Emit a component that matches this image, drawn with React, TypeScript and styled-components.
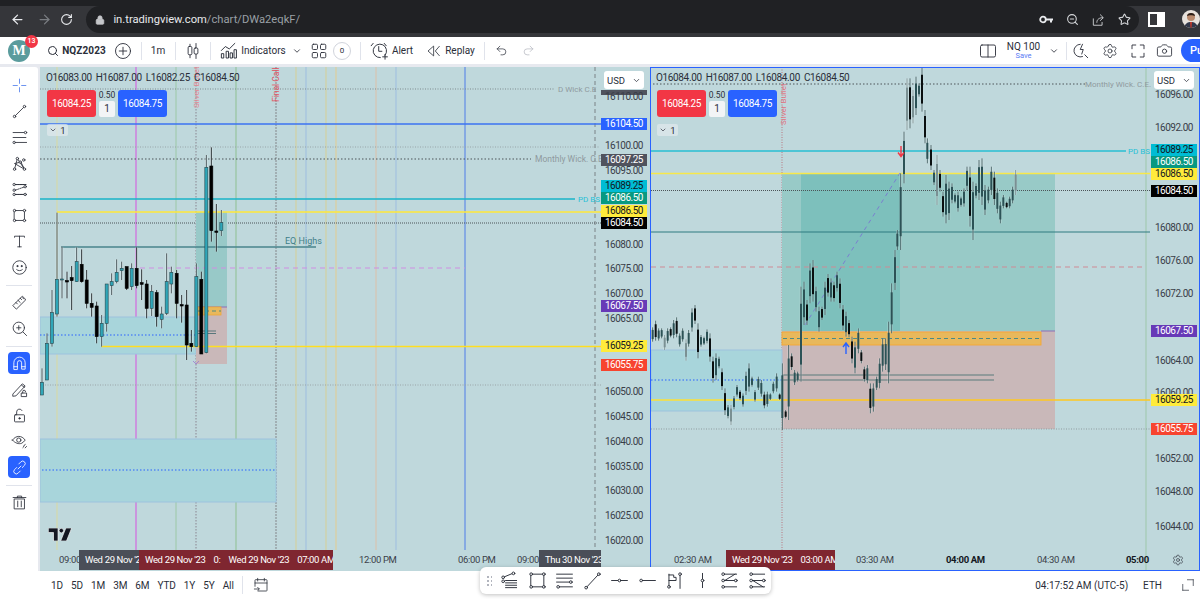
import React from 'react';
import styled, { createGlobalStyle } from 'styled-components';
import {
  ArrowLeft,
  ArrowRight,
  RotateCw,
  Lock,
  ZoomOut,
  Star,
  Search,
  ChevronDown,
  Undo2,
  Redo2,
  Settings,
  Camera,
} from 'lucide-react';

const GlobalStyle = createGlobalStyle`
  html, body { margin: 0; padding: 0; background: #fff; }
  body { font-family: Roboto, "Liberation Sans", sans-serif; }
`;

const INK = '#2a2e39';

/* ---------- small icon helper ---------- */
const Ico = ({ s = 20, vb = 24, sw = 1.2, c = INK, children }: { s?: number; vb?: number; sw?: number; c?: string; children: React.ReactNode }) => (
  <svg width={s} height={s} viewBox={`0 0 ${vb} ${vb}`} fill="none" stroke={c} strokeWidth={sw} strokeLinecap="round" strokeLinejoin="round">
    {children}
  </svg>
);

const Dot = ({ x, y, r = 1.7 }: { x: number; y: number; r?: number }) => <circle cx={x} cy={y} r={r} fill="#fff" />;

const CrossIcon = () => (
  <Ico c="#6c93f0" sw={1.4}>
    <path d="M12 3v6M12 15v6M3 12h6M15 12h6" />
  </Ico>
);
const LineIcon = () => (
  <Ico>
    <path d="M6 18L18 6" />
    <Dot x={5} y={19} />
    <Dot x={19} y={5} />
  </Ico>
);
const FibIcon = () => (
  <Ico>
    <path d="M3 5h16M3 12h18M7 19h15" />
    <Dot x={20.5} y={5} />
    <Dot x={4.5} y={19} />
  </Ico>
);
const PatternIcon = () => (
  <Ico>
    <path d="M5 20L9 5l10 15-5-10L5 12l14 8" />
    <Dot x={5} y={20} />
    <Dot x={9} y={5} />
    <Dot x={19} y={20} />
    <Dot x={18} y={7} />
    <Dot x={13} y={10} />
  </Ico>
);
const ChannelIcon = () => (
  <Ico>
    <path d="M6 5h15M6 19h15M6 13l14-5" strokeDasharray="2 1.5" />
    <path d="M6 5h15M6 19h15" />
    <Dot x={4.5} y={5} />
    <Dot x={4.5} y={13} />
    <Dot x={4.5} y={19} />
    <Dot x={20} y={19} />
    <Dot x={20} y={8} />
  </Ico>
);
const RectIcon = () => (
  <Ico>
    <rect x="5" y="5" width="14" height="14" />
    <Dot x={5} y={5} />
    <Dot x={19} y={5} />
    <Dot x={5} y={19} />
    <Dot x={19} y={19} />
  </Ico>
);
const TextIcon = () => (
  <Ico>
    <path d="M5 6V4.500h14V6M12 4.500v15M9.500 19.500h5" />
  </Ico>
);
const SmileIcon = () => (
  <Ico>
    <circle cx="12" cy="12" r="9.500" />
    <circle cx="9" cy="10" r=".8" fill={INK} />
    <circle cx="15" cy="10" r=".8" fill={INK} />
    <path d="M8 15c2 2 6 2 8 0" />
  </Ico>
);
const RulerIcon = () => (
  <Ico>
    <path d="M3 16L16 3l5 5L8 21zM7 12l2 2M10 9l3 3M13 6l2 2M16 5l2 2" />
  </Ico>
);
const ZoomPlusIcon = () => (
  <Ico>
    <circle cx="11" cy="11" r="8" />
    <path d="M11 8v6M8 11h6M17 17l5 5" />
  </Ico>
);
const MagnetIcon = () => (
  <Ico c="#fff">
    <path d="M4 20v-9a8 8 0 0116 0v9h-5v-9a3 3 0 00-6 0v9zM4 16.500h5M15 16.500h5" />
  </Ico>
);
const PencilLockIcon = () => (
  <Ico>
    <path d="M3 18L16 4l4 3L7 21l-4 .5zM15 6l4 3" />
    <rect x="15" y="17" width="7" height="5" />
    <path d="M16.500 17v-2a2 2 0 014 0" />
  </Ico>
);
const LockIcon = () => (
  <Ico>
    <rect x="5" y="11" width="14" height="10" rx="1" />
    <path d="M8 11V7a4 4 0 017.500-2" />
    <circle cx="12" cy="16" r="1" fill={INK} />
  </Ico>
);
const EyeIcon = () => (
  <Ico>
    <path d="M2 10c5-7 13-7 18 0-1.500 2-3 3.500-5 4.500-4 1.500-9 0-13-4.500z" />
    <circle cx="11" cy="10" r="3" />
    <path d="M17 21c1 0 1-5 3-5M22 19l-2 2" />
  </Ico>
);
const LinkIcon = () => (
  <Ico c="#fff">
    <path d="M10 14l4-4M8 12l-3 3a3.500 3.500 0 005 5l3-3M16 12l3-3a3.500 3.500 0 00-5-5l-3 3" />
  </Ico>
);
const TrashIcon = () => (
  <Ico>
    <path d="M5 7h14v14H5zM3 5h18M9 5V3h6v2M9.500 10v8M14.500 10v8" />
  </Ico>
);

const CandleIcon = () => (
  <Ico s={18}>
    <path d="M8 3v18M16 2v20" />
    <rect x="5.500" y="6" width="5" height="11" rx="1.500" fill="#fff" />
    <rect x="13.500" y="8" width="5" height="8" rx="1.500" fill="#fff" />
  </Ico>
);
const IndicatorsIcon = () => (
  <Ico s={19}>
    <path d="M3 12L8 7l5 3 7-7M3 21v-5h3v5zM9 21v-8h3v8zM14 21v-6h3v6zM19 21V11h3v10z" />
  </Ico>
);
const LayoutsIcon = () => (
  <Ico s={18}>
    <rect x="3" y="3" width="7" height="7" rx="1.500" />
    <rect x="14" y="3" width="7" height="7" rx="1.500" />
    <rect x="3" y="14" width="7" height="7" rx="1.500" />
    <rect x="14" y="14" width="7" height="7" rx="1.500" />
  </Ico>
);
const AlarmIcon = () => (
  <Ico s={19}>
    <path d="M13 21a8.500 8.500 0 11 6-3M11 7v6h4M4 3L1.500 6M18 3l2.500 3M19 17v6M16 20h6" />
  </Ico>
);
const ReplayIcon = () => (
  <Ico s={16}>
    <path d="M11 5l-8 7 8 7zM20 5l-6 7 6 7" />
  </Ico>
);
const SplitIcon = () => (
  <Ico s={18}>
    <rect x="2" y="4" width="20" height="16" rx="2" />
    <path d="M12 4v16" />
  </Ico>
);
const QuickIcon = () => (
  <Ico s={18}>
    <path d="M11 3a8.500 8.500 0 103 16.500M17 17l4 4M14 3l-3 7h4l-2 6" />
  </Ico>
);
const FullscreenIcon = () => (
  <Ico s={18}>
    <path d="M4 9V4h5M15 4h5v5M20 15v5h-5M9 20H4v-5" />
  </Ico>
);
const PanelIcon = () => (
  <svg width="17" height="15" viewBox="0 0 17 15">
    <path fill="#fff" fillRule="evenodd" d="M0 0h17v15H0zM2 2v11h7V2z" />
  </svg>
);
const KeyIcon = () => (
  <svg width="14" height="9" viewBox="0 0 14 9">
    <circle cx="4" cy="4.500" r="2.800" fill="none" stroke="#e8eaed" strokeWidth="1.800" />
    <path d="M7 3.500h7v2h-1v2h-2v-2H7z" fill="#e8eaed" />
  </svg>
);
const ShareBoxIcon = () => (
  <Ico s={14} c="#d5d7da" sw={1.5}>
    <path d="M4 10v11h15v-5M10 16c0-5 4-8 10-8M16 3l5 5-5 5" />
  </Ico>
);
const CalendarIcon = () => (
  <Ico s={16}>
    <path d="M8 21h12a1 1 0 001-1V5a1 1 0 00-1-1H4a1 1 0 00-1 1v9M3 9h18M7 2v4M17 2v4M2 18h7M7 15.500L9.500 18 7 20.500" />
  </Ico>
);
const AdjustIcon = () => (
  <Ico s={14}>
    <path d="M3 21V11M3 21h10M21 3v10M21 3H11" />
  </Ico>
);

const TvLogo = () => (
  <svg width="24" height="13" viewBox="0 0 36 20">
    <path d="M0 0h15v20H8V7H0z" fill="#131722" stroke="#fff" strokeWidth="1" />
    <circle cx="20" cy="4" r="3.500" fill="#131722" stroke="#fff" strokeWidth="1" />
    <path d="M27 0h9l-8 20h-9z" fill="#131722" stroke="#fff" strokeWidth="1" />
  </svg>
);

const FloatIcons = [
  <Ico s={19} key="a"><path d="M4 8l12-5M7 12h14M7 15h14M7 18h14M7 21h14" /><Dot x={4} y={8} /><Dot x={4} y={13} /><Dot x={17} y={3} /></Ico>,
  <Ico s={19} key="b"><rect x="4" y="4" width="16" height="16" /><Dot x={4} y={4} /><Dot x={20} y={4} /><Dot x={4} y={20} /><Dot x={20} y={20} /></Ico>,
  <Ico s={19} key="c"><path d="M2 4h20M2 9h20M2 14h18M6 20h16" /><Dot x={20} y={14} /><Dot x={4} y={20} /></Ico>,
  <Ico s={19} key="d"><path d="M5 20L19 5" /><Dot x={4} y={21} /><Dot x={20} y={4} /></Ico>,
  <Ico s={19} key="e"><path d="M2 12h20" /><Dot x={12} y={12} /></Ico>,
  <Ico s={19} key="f"><path d="M6 12h16" /><Dot x={4} y={12} /></Ico>,
  <Ico s={19} key="g"><path d="M5 4v16M5 5h6v3h3v4H5M19 6v16" /><Dot x={5} y={20} /><Dot x={19} y={4} /></Ico>,
  <Ico s={19} key="h"><path d="M12 3v18" /><Dot x={12} y={12} /></Ico>,
  <Ico s={19} key="i"><path d="M5 4h16M5 12h16M5 20h16M6 12l13-8" /><Dot x={4} y={4} /><Dot x={4} y={12} /><Dot x={4} y={20} /><Dot x={20} y={12} /></Ico>,
  <Ico s={19} key="j"><path d="M5 4h16M5 12h16M5 20h16M6 12l13 8" /><Dot x={4} y={4} /><Dot x={20} y={12} /><Dot x={4} y={20} /><Dot x={4} y={12} /></Ico>,
];

/* ---------- chart data (reference pixel coords) ---------- */
type C = [number, number, number, number, number, number];
// x, high, bodyTop, bodyBottom, low, black?
const leftRaw: C[] = [
  [126,715,757,795,795,0],[141,610,640,750,750,0],[156,480,548,640,650,0],[171,248,448,552,560,0],
  [186,350,447,449,505,0],[201,425,452,456,505,1],[215,408,443,452,540,1],[230,352,395,455,456,0],
  [245,358,403,455,458,1],[260,420,450,520,535,1],[275,490,520,532,560,1],[290,515,528,620,640,1],
  [305,555,580,620,650,0],[320,462,462,580,605,0],[335,430,455,467,495,0],[350,388,427,455,460,0],
  [365,395,415,422,450,0],[380,410,410,475,480,1],[395,400,415,470,480,0],[410,352,415,467,475,1],
  [425,418,458,463,510,1],[440,450,462,535,565,1],[455,465,484,535,558,0],[470,480,488,560,590,1],
  [485,530,552,568,595,0],[500,370,455,550,555,0],[514,410,427,462,490,0],[530,420,430,520,565,1],
  [545,495,524,528,578,1],[560,480,525,645,690,1],[574,600,640,650,665,1],[589,400,440,650,650,0],
  [604,425,448,672,672,1],[619,75,112,668,670,0],[634,52,108,302,335,1],[649,222,303,307,365,1],
  [664,240,278,302,318,0],
];
const leftCandles: C[] = leftRaw.map(([x, h, t, b, l, k]) => [x / 3, 130 + h / 3, 130 + t / 3, 130 + b / 3, 130 + l / 3, k]);

type R = [number, number, number, number];
// x, high, low, shade (0 light, 1 teal, 2 black) in zoomed coords
const rightA: R[] = [
  [8,232,275,1],[17,212,272,2],[26,235,272,1],[35,235,265,1],[44,255,300,0],[53,235,280,1],[62,232,262,2],[71,210,265,1],
  [80,202,262,2],[89,250,290,1],[98,235,275,1],[108,268,332,0],[116,240,290,1],[126,175,245,1],[135,165,222,2],[144,220,325,2],
  [153,255,290,1],[162,260,285,1],[171,238,280,1],[180,250,335,2],[189,320,398,2],[198,310,390,1],[207,320,355,1],[216,355,420,2],
  [225,415,495,2],[234,465,505,1],[243,465,525,0],[252,438,478,1],[261,405,440,1],[270,420,450,2],[279,430,470,1],[288,365,435,1],
  [297,340,425,1],[306,380,410,1],[315,420,455,1],[325,380,420,1],[334,390,440,1],[343,425,475,2],[352,425,470,1],[361,430,450,1],
  [370,395,430,1],[380,370,425,1],[389,430,450,2],[397,340,540,1],[407,480,505,2],[416,285,510,1],[425,310,360,2],[434,360,405,1],
  [443,365,395,1],[453,110,395,1],[462,95,225,1],[471,150,225,2],[480,40,160,1],[489,30,155,2],[498,110,185,1],[507,170,245,1],
  [516,170,210,2],[525,95,195,1],[534,72,140,2],[543,85,155,1],[552,95,155,2],[561,65,125,1],[570,85,175,2],[579,165,240,2],
  [588,185,260,1],[597,210,262,2],[606,260,340,2],[615,275,370,1],[625,235,310,1],[634,300,340,2],[643,350,395,2],[652,345,400,1],
  [661,400,490,2],[670,400,485,1],[680,380,420,1],[689,325,415,1],[698,265,365,1],[707,265,360,1],[716,215,400,1],[725,100,250,1],
  [735,0,120,1],
];
const rightB: R[] = [
  [352,510,570,1],[362,340,570,1],[372,215,370,1],[381,55,210,0],[390,55,205,2],[399,90,190,0],[408,50,165,1],[417,70,110,1],
  [426,20,155,2],[435,150,250,2],[442,235,310,1],[453,255,330,2],[462,330,375,1],[471,285,435,0],[480,330,395,2],[489,395,470,2],
  [498,345,490,1],[507,365,480,1],[516,370,430,1],[525,400,430,1],[534,395,455,1],[543,410,440,1],[552,385,440,1],[561,320,390,1],
  [570,320,500,2],[579,365,540,1],[588,370,415,1],[597,300,420,1],[606,295,435,1],[615,375,465,1],[625,380,430,1],[634,320,405,1],
  [643,335,435,2],[652,385,460,1],[661,425,490,1],[670,405,445,1],[680,425,445,2],[689,410,445,1],[698,380,430,1],[707,330,405,0],
];
const rightCandles: R[] = [
  ...rightA.map(([x, h, l, k]): R => [650 + x / 3, 250 + h / 3, 250 + l / 3, k]),
  ...rightB.map(([x, h, l, k]): R => [780 + x / 3, 60 + h / 3, 60 + l / 3, k]),
];

const leftPrices: [number, string][] = [
  [97,'16110.00'],[146,'16100.00'],[171,'16095.00'],[245,'16080.00'],[269,'16075.00'],[294,'16070.00'],[319,'16065.00'],
  [392,'16050.00'],[417,'16045.00'],[442,'16040.00'],[467,'16035.00'],[491,'16030.00'],[516,'16025.00'],[541,'16020.00'],
];
const rightPrices: [number, string][] = [
  [95,'16096.00'],[128,'16092.00'],[228,'16080.00'],[261,'16076.00'],[294,'16072.00'],[361,'16064.00'],[393,'16060.00'],
  [459,'16052.00'],[492,'16048.00'],[527,'16044.00'],
];
type Tag = [number, string, string, string];
const leftTags: Tag[] = [
  [124,'16104.50','#2962ff','#fff'],[160,'16097.25','#50535e','#fff'],[186,'16089.25','#00bcd4','#131722'],
  [198,'16086.50','#089981','#fff'],[211,'16086.50','#ffeb3b','#131722'],[223,'16084.50','#000','#fff'],[306,'16067.50','#673ab7','#fff'],
  [346,'16059.25','#ffeb3b','#131722'],[365,'16055.75','#f7442f','#fff'],
];
const rightTags: Tag[] = [
  [150,'16089.25','#00bcd4','#131722'],[162,'16086.50','#089981','#fff'],[174,'16086.50','#ffeb3b','#131722'],[191,'16084.50','#000','#fff'],
  [331,'16067.50','#673ab7','#fff'],[400,'16059.25','#ffeb3b','#131722'],[429,'16055.75','#f7442f','#fff'],
];

/* ---------- layout ---------- */
const Page = styled.div`
  position: relative;
  width: 1200px;
  height: 599px;
  overflow: hidden;
  display: flex;
  flex-direction: column;
  background: #fff;
`;

const TabStrip = styled.div`
  height: 6px;
  background: #202124;
`;

const BrowserBar = styled.div`
  height: 31px;
  background: #35363a;
  display: flex;
  align-items: flex-start;
  color: #e8eaed;
`;

const NavBtn = styled.div<{ $w: number; $dim?: boolean }>`
  width: ${(p) => p.$w}px;
  height: 27px;
  display: flex;
  align-items: center;
  justify-content: center;
  color: ${(p) => (p.$dim ? '#7a7d82' : '#e8eaed')};
`;

const UrlBar = styled.div`
  width: 1061px;
  height: 27px;
  margin-left: 5px;
  border-radius: 14px;
  background: #202124;
  display: flex;
  align-items: center;
  padding: 0 2px 0 9px;
  box-sizing: border-box;
`;

const UrlText = styled.div`
  margin-left: 8px;
  font-size: 11.2px;
  color: #e8eaed;
  flex: 1;
  span { color: #9aa0a6; }
`;

const UrlIcon = styled.div`
  width: 26px;
  display: flex;
  justify-content: center;
  color: #d5d7da;
`;

const ProfileDot = styled.div`
  width: 18px;
  height: 18px;
  margin: 4px 0 0 9px;
  border-radius: 50%;
  overflow: hidden;
  background: #e8e2dc;
`;

const TopBar = styled.div`
  height: 27px;
  background: #fff;
  display: flex;
  align-items: center;
  color: ${INK};
  font-size: 10px;
`;

const Slot = styled.div<{ $w: number; $ml?: number }>`
  flex: none;
  width: ${(p) => p.$w}px;
  margin-left: ${(p) => p.$ml ?? 0}px;
  display: flex;
  align-items: center;
  justify-content: center;
  gap: 3px;
  white-space: nowrap;
`;

const VDivider = styled.div<{ $ml: number }>`
  flex: none;
  width: 1px;
  height: 18px;
  margin-left: ${(p) => p.$ml}px;
  background: #e0e3eb;
`;

const Avatar = styled.div`
  position: relative;
  width: 22px;
  height: 22px;
  border-radius: 50%;
  background: #5b9c9d;
  color: #fff;
  font: 700 14px "Liberation Serif", serif;
  display: flex;
  align-items: center;
  justify-content: center;
`;

const Badge = styled.span`
  position: absolute;
  top: -5px;
  right: -8px;
  width: 13px;
  height: 13px;
  border-radius: 50%;
  background: #f23645;
  color: #fff;
  font: 500 7px Roboto, sans-serif;
  display: flex;
  align-items: center;
  justify-content: center;
`;

const Symbol = styled.span`
  font-weight: 700;
  font-size: 10px;
  letter-spacing: 0.1px;
`;

const CountCircle = styled.div`
  width: 16px;
  height: 16px;
  border-radius: 50%;
  border: 1px solid #d1d4dc;
  font-size: 8px;
  display: flex;
  align-items: center;
  justify-content: center;
`;

const SaveBox = styled.div`
  display: flex;
  flex-direction: column;
  align-items: center;
  line-height: 9px;
  font-size: 10px;
  small { font-size: 7.5px; color: #5b7cf5; }
`;

const PublishBtn = styled.div`
  flex: none;
  width: 50px;
  height: 23px;
  margin-left: 8px;
  border-radius: 12px 0 0 12px;
  background: #2962ff;
  color: #fff;
  font-size: 11px;
  font-weight: 500;
  line-height: 23px;
  padding-left: 9px;
`;

const Main = styled.div`
  flex: none;
  height: 507px;
  display: flex;
  background: #e7e9ef;
  padding-top: 3px;
  box-sizing: border-box;
`;

const SideBar = styled.div`
  flex: none;
  width: 38px;
  margin-right: 2px;
  padding-top: 5px;
  box-sizing: border-box;
  background: #fff;
  border-radius: 0 3px 0 0;
  display: flex;
  flex-direction: column;
  align-items: center;
`;

const SideBtn = styled.div<{ $on?: boolean }>`
  flex: none;
  width: 22px;
  height: ${(p) => (p.$on ? 22 : 26)}px;
  margin: ${(p) => (p.$on ? '2px 0' : '0')};
  border-radius: 4px;
  background: ${(p) => (p.$on ? '#2962ff' : 'transparent')};
  display: flex;
  align-items: center;
  justify-content: center;
  svg { width: 17px; height: 17px; }
`;

const SideSep = styled.div`
  flex: none;
  width: 26px;
  height: 1px;
  margin: 5px 0 3px;
  background: #e0e3eb;
`;

const Pane = styled.div<{ $w: number; $active?: boolean }>`
  position: relative;
  flex: none;
  width: ${(p) => p.$w}px;
  height: 504px;
  background: #bfd8dc;
  overflow: hidden;
  &::after {
    content: '';
    display: ${(p) => (p.$active ? 'block' : 'none')};
    position: absolute;
    inset: 0;
    border: 1.5px solid #2962ff;
    pointer-events: none;
  }
`;

const ChartSvg = styled.svg`
  position: absolute;
  inset: 0;
  width: 100%;
  height: 100%;
  text {
    font-family: Roboto, "Liberation Sans", sans-serif;
  }
`;

const Legend = styled.div<{ $x: number }>`
  position: absolute;
  top: 4px;
  left: ${(p) => p.$x}px;
  font-size: 10px;
  line-height: 14px;
  color: #2a2e39;
  white-space: nowrap;
  display: flex;
  gap: 4px;
  letter-spacing: -0.35px;
`;

const TradeBox = styled.div<{ $x: number }>`
  position: absolute;
  top: 23px;
  left: ${(p) => p.$x}px;
  display: flex;
  gap: 3px;
  align-items: stretch;
`;

const TradeBtn = styled.div<{ $bg: string }>`
  width: 49px;
  height: 27px;
  border-radius: 3px;
  background: ${(p) => p.$bg};
  color: #fff;
  font-size: 10px;
  letter-spacing: -0.4px;
  display: flex;
  align-items: center;
  justify-content: center;
`;

const QtyBox = styled.div`
  width: 16px;
  display: flex;
  flex-direction: column;
  align-items: center;
  justify-content: space-between;
  font-size: 8.5px;
  color: #2a2e39;
  b {
    width: 16px;
    height: 16px;
    border-radius: 2px;
    background: #f2f4f6;
    font-weight: 400;
    font-size: 10px;
    line-height: 16px;
    text-align: center;
  }
`;

const Collapse = styled.div<{ $x: number }>`
  position: absolute;
  top: 57px;
  left: ${(p) => p.$x}px;
  width: 21px;
  height: 12px;
  font-size: 9.5px;
  color: #2a2e39;
  background: rgba(225, 233, 236, 0.7);
  border-radius: 2px;
  display: flex;
  align-items: center;
  justify-content: center;
  gap: 3px;
`;

const PriceAxis = styled.div<{ $x: number; $w: number }>`
  position: absolute;
  top: 0;
  bottom: 0;
  left: ${(p) => p.$x}px;
  width: ${(p) => p.$w}px;
`;

const UsdBox = styled.div`
  position: absolute;
  top: 4px;
  right: 3px;
  left: 3px;
  height: 18px;
  border-radius: 3px;
  background: #fff;
  font-size: 9.5px;
  color: #2a2e39;
  display: flex;
  align-items: center;
  justify-content: space-between;
  padding: 0 3px;
  box-sizing: border-box;
`;

const PriceText = styled.div<{ $y: number }>`
  position: absolute;
  left: 0;
  right: 0;
  top: ${(p) => p.$y - 73}px;
  height: 12px;
  line-height: 12px;
  text-align: center;
  font-size: 10px;
  letter-spacing: -0.5px;
  color: #3a3e49;
`;

const PriceTag = styled(PriceText)<{ $bg: string; $fg: string }>`
  background: ${(p) => p.$bg};
  color: ${(p) => p.$fg};
`;

const StubTag = styled.div`
  position: absolute;
  left: 0;
  right: 0;
  top: 23px;
  height: 5px;
  background: #50535e;
`;

const TimeAxis = styled.div`
  position: absolute;
  left: 0;
  right: 0;
  bottom: 0;
  height: 21px;
  font-size: 9.5px;
  letter-spacing: -0.35px;
  color: #3a3e49;
`;

const TimeLabel = styled.div<{ $x: number; $strong?: boolean }>`
  position: absolute;
  top: 0;
  left: ${(p) => p.$x}px;
  height: 20px;
  line-height: 20px;
  white-space: nowrap;
  font-weight: ${(p) => (p.$strong ? 700 : 400)};
  color: ${(p) => (p.$strong ? '#131722' : '#3a3e49')};
`;

const TimeMark = styled.div<{ $x: number; $w: number; $bg: string }>`
  position: absolute;
  top: 0;
  left: ${(p) => p.$x}px;
  width: ${(p) => p.$w}px;
  height: 20px;
  line-height: 20px;
  padding-left: 6px;
  box-sizing: border-box;
  overflow: hidden;
  white-space: nowrap;
  display: flex;
  gap: 8px;
  background: ${(p) => p.$bg};
  color: #fff;
`;

const CornerGear = styled.div`
  position: absolute;
  right: 16px;
  top: 4px;
  display: flex;
`;

const LogoMark = styled.div`
  position: absolute;
  left: 8px;
  top: 461px;
  display: flex;
`;

const BottomBar = styled.div`
  flex: none;
  height: 28px;
  background: #fff;
  display: flex;
  align-items: center;
  padding-left: 51px;
  font-size: 10px;
  color: ${INK};
`;

const Ranges = styled.div`
  display: flex;
  gap: 8px;
  letter-spacing: -0.1px;
`;

const BarSep = styled.div`
  width: 1px;
  height: 18px;
  margin: 0 10px 0 8px;
  background: #e0e3eb;
`;

const ClockArea = styled.div`
  margin-left: auto;
  display: flex;
  align-items: center;
  gap: 15px;
  padding-right: 5px;
`;

const EthLabel = styled.span`
  margin-right: 4px;
`;

const FloatBar = styled.div`
  position: absolute;
  left: 480px;
  top: 567px;
  width: 291px;
  height: 27px;
  border-radius: 6px;
  background: #fff;
  box-shadow: 0 1px 4px rgba(0, 0, 0, 0.25);
  display: flex;
  align-items: center;
  padding-left: 16px;
  box-sizing: border-box;
`;

const FloatBtn = styled.div`
  width: 27.500px;
  display: flex;
  justify-content: center;
`;

const Grip = styled.div`
  position: absolute;
  left: 6px;
  top: 8px;
  width: 6px;
  height: 11px;
  background-image: radial-gradient(#b2b5be 0.8px, transparent 0.9px);
  background-size: 4px 4px;
`;

/* ---------- chart drawings ---------- */
const VLine = ({ x, y1 = 67, y2 = 550, c, w = 1, dash }: { x: number; y1?: number; y2?: number; c: string; w?: number; dash?: string }) => (
  <line x1={x} x2={x} y1={y1} y2={y2} stroke={c} strokeWidth={w} strokeDasharray={dash} />
);
const HLine = ({ y, x1, x2, c, w = 1, dash }: { y: number; x1: number; x2: number; c: string; w?: number; dash?: string }) => (
  <line x1={x1} x2={x2} y1={y} y2={y} stroke={c} strokeWidth={w} strokeDasharray={dash} />
);
const Label = ({ x, y, c = '#8f9a9e', size = 8, bold, children }: { x: number; y: number; c?: string; size?: number; bold?: boolean; children: string }) => (
  <text x={x} y={y} fill={c} fontSize={size} fontWeight={bold ? 700 : 400}>{children}</text>
);
const Rotated = ({ x, y, c, size = 8, children }: { x: number; y: number; c: string; size?: number; children: string }) => (
  <text x={x} y={y} fill={c} fontSize={size} transform={`rotate(-90 ${x} ${y})`}>{children}</text>
);

const LeftChart = () => (
  <ChartSvg viewBox="40 67 610 504">
    <VLine x={57} c="#d9d9a0" />
    <VLine x={136} c="#d653e0" />
    <VLine x={176} c="#9cc8a6" />
    <VLine x={196} c="#8a8590" dash="1.500 1.500" />
    <VLine x={236} c="#9cc8a6" w={1.4} />
    <VLine x={276} c="#8e9498" dash="2 1" w={1.2} />
    <VLine x={296} c="#d6cf95" />
    <VLine x={306} c="#9dbde0" />
    <VLine x={326} c="#d6cf95" />
    <VLine x={336} c="#e3cc8f" />
    <VLine x={376} c="#dcc0a8" />
    <VLine x={396} c="#9dbde0" />
    <VLine x={465} c="#4f7de8" />
    <VLine x={595} c="#7a8286" dash="4 3" y2={571} />

    <HLine y={89} x1={40} x2={555} c="#7f8b8f" dash="1 1.500" />
    <HLine y={124} x1={40} x2={601} c="#3b73f2" w={1.6} />
    <HLine y={147} x1={40} x2={600} c="#98a4a8" dash="1 1.500" />
    <HLine y={159} x1={40} x2={531} c="#4c5458" dash="1.500 2" />
    <HLine y={199} x1={40} x2={575} c="#18b4c8" w={1.3} />
    <HLine y={223} x1={40} x2={601} c="#4c5458" dash="1 1" />
    <HLine y={385} x1={40} x2={601} c="#9aa5a8" dash="1 1.500" />

    <rect x={40} y={317} width={156} height={37} fill="#a8d5db" stroke="#9dc2de" />
    <HLine y={335} x1={40} x2={196} c="#2962ff" dash="1.500 2" w={1.2} />
    <rect x={40} y={439} width={236} height={63} fill="#a8d5db" stroke="#9dc2de" />
    <HLine y={470} x1={42} x2={276} c="#2962ff" dash="1.500 2" w={1.2} />

    <rect x={196} y={212} width={31} height={95} fill="#98c9c8" />
    <rect x={196} y={307} width={31} height={57} fill="#c9b8b9" />
    <HLine y={307} x1={196} x2={227} c="#8d6fb8" />
    <rect x={197} y={307} width={24} height={8} fill="#e8b85c" stroke="#f0a733" strokeWidth={0.8} />
    <HLine y={311} x1={198} x2={221} c="#4f8a82" dash="4 3" />

    <HLine y={212} x1={57} x2={601} c="#ffe83a" w={1.4} />
    <HLine y={247} x1={61} x2={316} c="#49858c" w={1.3} />
    <HLine y={268} x1={140} x2={465} c="#cf8ee2" w={1.2} dash="5 4" />
    <HLine y={346.5} x1={101} x2={601} c="#ffde21" w={1.4} />
    <HLine y={331} x1={196} x2={216} c="#58777b" />
    <HLine y={333.500} x1={196} x2={216} c="#58777b" />

    <Label x={558} y={92} size={8}>D Wick C.E</Label>
    <Label x={535} y={162} size={8.500}>Monthly Wick. C.E</Label>
    <Label x={578} y={202} c="#27c0d6">PD BS</Label>
    <Label x={285} y={244} c="#3f8089" size={9}>EQ Highs</Label>
    <Rotated x={199} y={108} c="#e5848f">Silver Bullet</Rotated>
    <Rotated x={279} y={102} c="#e2515f" size={8.500}>Final Call</Rotated>

    {leftCandles.map(([x, h, t, b, l, k]) => (
      <g key={x}>
        <line x1={x} x2={x} y1={h} y2={l} stroke="rgba(255,255,255,.35)" strokeWidth={2.5} />
        <line x1={x} x2={x} y1={h} y2={l} stroke={k ? '#2b3336' : '#4c5b5e'} strokeWidth={1} />
        <rect x={x - 1.500} y={t} width={3} height={Math.max(b - t, 1)} fill={k ? '#000' : '#2fa6b8'} stroke={k ? '#000' : '#25474d'} strokeWidth={0.6} />
      </g>
    ))}
    <path d="M193 361l3 3 3-3" fill="none" stroke="#9a79d0" strokeWidth={0.8} />
  </ChartSvg>
);

const shades = ['#7a9093', '#2c5256', '#0a0f10'];

const RightChart = () => (
  <ChartSvg viewBox="650 67 550 504">
    <VLine x={782} c="#b8757f" dash="1 1.500" />
    <VLine x={1146} c="#9dc7aa" y2={571} />

    <rect x={782} y={174} width={273} height={157} fill="#98cac7" />
    <rect x={801} y={174} width={99} height={157} fill="#7dc0bc" />
    <rect x={782} y={331} width={273} height={98} fill="#c9b8b9" />
    <rect x={651} y={350} width={131} height={61} fill="#a8d5db" stroke="#9dc2de" />
    <HLine y={380} x1={651} x2={782} c="#2962ff" dash="1.500 2" w={1.2} />
    <rect x={782} y={332} width={259} height={13} fill="#e8b85c" stroke="#f5a733" strokeWidth={0.9} />
    <HLine y={338.500} x1={783} x2={1041} c="#4f8a82" dash="4 3" />
    <HLine y={331} x1={1041} x2={1055} c="#8d6fb8" />

    <HLine y={84} x1={653} x2={1085} c="#4c5458" dash="1.500 2" />
    <HLine y={151} x1={651} x2={1126} c="#27bfd3" w={1.6} />
    <HLine y={173.500} x1={651} x2={1150} c="#f7e84a" w={1.3} />
    <HLine y={190.500} x1={651} x2={1150} c="#4c5458" dash="1 1" />
    <HLine y={232} x1={651} x2={1150} c="#2f7a80" w={1.1} />
    <HLine y={267} x1={651} x2={1146} c="#cf8a95" dash="5 4" />
    <HLine y={375} x1={782} x2={994} c="#5a7a7c" w={1.1} />
    <HLine y={380} x1={782} x2={994} c="#5a7a7c" w={1.1} />
    <HLine y={400} x1={651} x2={782} c="#ffe033" w={1.4} />
    <HLine y={400} x1={782} x2={1150} c="#ffc81f" w={1.4} />
    <HLine y={429} x1={651} x2={1150} c="#8f9a9e" dash="1 1.500" />

    <line x1={805} y1={325} x2={900} y2={173} stroke="#7a7fd0" strokeWidth={1} strokeDasharray="4 4" />

    <Label x={1085} y={87}>Monthly Wick. C.E.</Label>
    <Label x={1128} y={154} c="#27c0d6">PD BS</Label>
    <Rotated x={786} y={125} c="#e2707e">Silver Bullet</Rotated>

    {rightCandles.map(([x, h, l, k]) => {
      const inset = (l - h) * 0.18;
      return (
        <g key={`${x}-${h}`}>
          <line x1={x} x2={x} y1={h} y2={l} stroke="rgba(255,255,255,.3)" strokeWidth={2.4} />
          <line x1={x} x2={x} y1={h} y2={l} stroke={k === 0 ? '#7a9093' : '#3e5c60'} strokeWidth={0.9} />
          <rect x={x - 1} y={h + inset} width={2} height={l - h - inset * 2} fill={shades[k]} />
        </g>
      );
    })}

    <path d="M901 146v10M898 152.500l3 4 3-4" fill="none" stroke="#f23645" strokeWidth={1.4} />
    <path d="M846 354v-11M843 347l3-4 3 4" fill="none" stroke="#2962ff" strokeWidth={1.4} />
  </ChartSvg>
);

const PriceColumn = ({ prices, tags, stub }: { prices: [number, string][]; tags: Tag[]; stub?: boolean }) => (
  <>
    <UsdBox>USD <ChevronDown size={9} strokeWidth={2} /></UsdBox>
    {stub && <StubTag />}
    {prices.map(([y, t]) => <PriceText key={y} $y={y}>{t}</PriceText>)}
    {tags.map(([y, t, bg, fg]) => <PriceTag key={y} $y={y} $bg={bg} $fg={fg}>{t}</PriceTag>)}
  </>
);

const ChartHead = ({ x, o, l }: { x: number; o: string; l: string }) => (
  <>
    <Legend $x={x}>
      <span>O{o}</span><span>H16087.00</span><span>L{l}</span><span>C16084.50</span>
    </Legend>
    <TradeBox $x={x + 1}>
      <TradeBtn $bg="#f23645">16084.25</TradeBtn>
      <QtyBox>0.50<b>1</b></QtyBox>
      <TradeBtn $bg="#2962ff">16084.75</TradeBtn>
    </TradeBox>
    <Collapse $x={x + 1}><ChevronDown size={8} strokeWidth={2} /> 1</Collapse>
  </>
);

export default function App() {
  const sideTop = [CrossIcon, LineIcon, FibIcon, PatternIcon, ChannelIcon, RectIcon, TextIcon, SmileIcon];
  const ranges = ['1D', '5D', '1M', '3M', '6M', 'YTD', '1Y', '5Y', 'All'];

  return (
    <Page>
      <GlobalStyle />
      <TabStrip />
      <BrowserBar>
        <NavBtn $w={36}><ArrowLeft size={15} /></NavBtn>
        <NavBtn $w={17} $dim><ArrowRight size={15} /></NavBtn>
        <NavBtn $w={29}><RotateCw size={13} /></NavBtn>
        <UrlBar>
          <Lock size={10} fill="#c5c7ca" color="#c5c7ca" />
          <UrlText>in.tradingview.com<span>/chart/DWa2eqkF/</span></UrlText>
          <UrlIcon><KeyIcon /></UrlIcon>
          <UrlIcon><ZoomOut size={13} /></UrlIcon>
          <UrlIcon><ShareBoxIcon /></UrlIcon>
          <UrlIcon><Star size={13} /></UrlIcon>
        </UrlBar>
        <NavBtn $w={34}><PanelIcon /></NavBtn>
        <ProfileDot>
          <svg width="18" height="18" viewBox="0 0 18 18">
            <circle cx="9" cy="7" r="4" fill="#b98a6d" />
            <path d="M5 6c0-4 8-4 8 0-2-1-6-1-8 0z" fill="#2a1d16" />
            <path d="M2 18c1-5 4-6 7-6s6 1 7 6z" fill="#31384a" />
            <path d="M8 12h2l-.5 6h-1z" fill="#c0392b" />
          </svg>
        </ProfileDot>
      </BrowserBar>

      <TopBar>
        <Slot $w={38}><Avatar>M<Badge>13</Badge></Avatar></Slot>
        <Slot $w={63} $ml={7}><Search size={12} strokeWidth={2} /><Symbol>NQZ2023</Symbol></Slot>
        <Slot $w={22} $ml={4}><Ico s={18} sw={1.2}><circle cx="12" cy="12" r="10" /><path d="M12 7v10M7 12h10" /></Ico></Slot>
        <VDivider $ml={7} />
        <Slot $w={24} $ml={4}>1m</Slot>
        <VDivider $ml={5} />
        <Slot $w={22} $ml={6}><CandleIcon /></Slot>
        <VDivider $ml={6} />
        <Slot $w={69} $ml={7}><IndicatorsIcon />Indicators</Slot>
        <Slot $w={14} $ml={3}><ChevronDown size={10} /></Slot>
        <Slot $w={18} $ml={6}><LayoutsIcon /></Slot>
        <Slot $w={18} $ml={5}><CountCircle>0</CountCircle></Slot>
        <VDivider $ml={9} />
        <Slot $w={47} $ml={7}><AlarmIcon />Alert</Slot>
        <Slot $w={53} $ml={9}><ReplayIcon />Replay</Slot>
        <VDivider $ml={7} />
        <Slot $w={18} $ml={7}><Undo2 size={13} strokeWidth={1.3} /></Slot>
        <Slot $w={18} $ml={9}><Redo2 size={13} strokeWidth={1.3} color="#b2b5be" /></Slot>
        <Slot $w={20} $ml={441}><SplitIcon /></Slot>
        <Slot $w={37} $ml={7}><SaveBox>NQ 100<small>Save</small></SaveBox></Slot>
        <Slot $w={14} $ml={5}><ChevronDown size={10} /></Slot>
        <VDivider $ml={5} />
        <Slot $w={18} $ml={5}><QuickIcon /></Slot>
        <Slot $w={18} $ml={11}><Settings size={16} strokeWidth={1.2} /></Slot>
        <Slot $w={18} $ml={10}><FullscreenIcon /></Slot>
        <Slot $w={18} $ml={8}><Camera size={17} strokeWidth={1.2} /></Slot>
        <PublishBtn>Pu</PublishBtn>
      </TopBar>

      <Main>
        <SideBar>
          {sideTop.map((Icon, i) => <SideBtn key={i}><Icon /></SideBtn>)}
          <SideSep />
          <SideBtn><RulerIcon /></SideBtn>
          <SideBtn><ZoomPlusIcon /></SideBtn>
          <SideSep />
          <SideBtn $on><MagnetIcon /></SideBtn>
          <SideBtn><PencilLockIcon /></SideBtn>
          <SideBtn><LockIcon /></SideBtn>
          <SideBtn><EyeIcon /></SideBtn>
          <SideBtn $on><LinkIcon /></SideBtn>
          <SideSep />
          <SideBtn><TrashIcon /></SideBtn>
        </SideBar>

        <Pane $w={610}>
          <LeftChart />
          <ChartHead x={6} o="16083.00" l="16082.25" />
          <PriceAxis $x={561} $w={46}>
            <PriceColumn prices={leftPrices} tags={leftTags} stub />
          </PriceAxis>
          <LogoMark><TvLogo /></LogoMark>
          <TimeAxis>
            <TimeLabel $x={19}>09:00</TimeLabel>
            <TimeLabel $x={319}>12:00 PM</TimeLabel>
            <TimeLabel $x={418}>06:00 PM</TimeLabel>
            <TimeLabel $x={477}>09:00</TimeLabel>
            <TimeMark $x={39} $w={60} $bg="#4a4e58">Wed 29 Nov '2</TimeMark>
            <TimeMark $x={99} $w={194} $bg="#7f2630">
              <span>Wed 29 Nov '23</span>
              <span>0:</span>
              <span>Wed 29 Nov '23</span>
              <span>07:00 AM</span>
            </TimeMark>
            <TimeMark $x={499} $w={62} $bg="#4a4e58">Thu 30 Nov '23</TimeMark>
          </TimeAxis>
        </Pane>

        <Pane $w={550} $active>
          <RightChart />
          <ChartHead x={6} o="16084.00" l="16084.00" />
          <PriceAxis $x={501} $w={46}>
            <PriceColumn prices={rightPrices} tags={rightTags} />
          </PriceAxis>
          <TimeAxis>
            <TimeLabel $x={24}>02:30 AM</TimeLabel>
            <TimeMark $x={76} $w={109} $bg="#7f2630">
              <span>Wed 29 Nov '23</span>
              <span>03:00 AM</span>
            </TimeMark>
            <TimeLabel $x={206}>03:30 AM</TimeLabel>
            <TimeLabel $x={296} $strong>04:00 AM</TimeLabel>
            <TimeLabel $x={387}>04:30 AM</TimeLabel>
            <TimeLabel $x={476} $strong>05:00</TimeLabel>
            <CornerGear><Settings size={12} strokeWidth={1.4} /></CornerGear>
          </TimeAxis>
        </Pane>
      </Main>

      <BottomBar>
        <Ranges>{ranges.map((r) => <span key={r}>{r}</span>)}</Ranges>
        <BarSep />
        <CalendarIcon />
        <ClockArea>
          <span>04:17:52 AM (UTC-5)</span>
          <EthLabel>ETH</EthLabel>
          <AdjustIcon />
        </ClockArea>
      </BottomBar>

      <FloatBar>
        <Grip />
        {FloatIcons.map((icon) => <FloatBtn key={icon.key}>{icon}</FloatBtn>)}
      </FloatBar>
    </Page>
  );
}
